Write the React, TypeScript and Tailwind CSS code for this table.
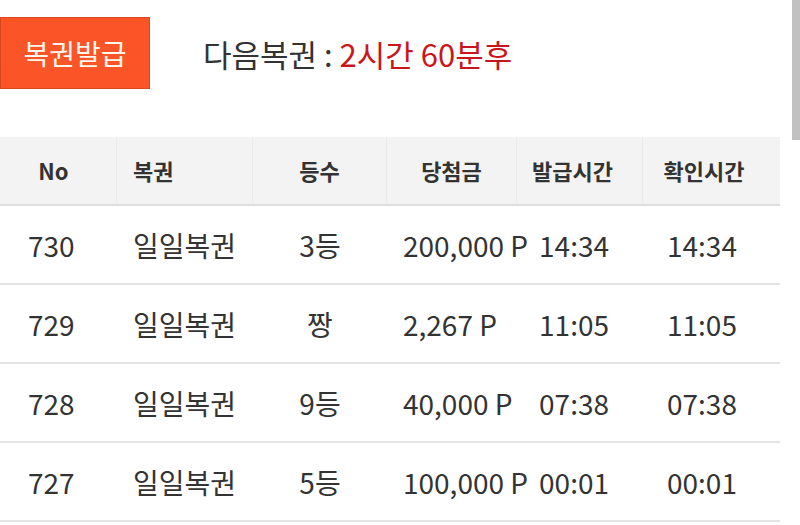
import React from 'react'

type Row = {
  no: number
  name: string
  rank: string
  prize: string
  issued: string
  checked: string
}

const rows: Row[] = [
  { no: 730, name: '일일복권', rank: '3등', prize: '200,000 P', issued: '14:34', checked: '14:34' },
  { no: 729, name: '일일복권', rank: '짱', prize: '2,267 P', issued: '11:05', checked: '11:05' },
  { no: 728, name: '일일복권', rank: '9등', prize: '40,000 P', issued: '07:38', checked: '07:38' },
  { no: 727, name: '일일복권', rank: '5등', prize: '100,000 P', issued: '00:01', checked: '00:01' },
]

const cols = 'grid grid-cols-[117px_136px_134px_130px_126px_137px]'

export default function App() {
  return (
    <div
      className="relative h-[525px] w-[800px] overflow-hidden bg-white text-[#333]"
      style={{ fontFamily: '"Noto Sans CJK KR", "Noto Sans", sans-serif' }}
    >
      {/* scrollbar thumb */}
      <div className="absolute right-0 top-0 h-[140px] w-[8px] bg-[#c1c1c1]" />

      <div className="flex items-center pt-[17px]">
        <button className="flex h-[72px] w-[150px] items-center justify-center border border-[#d9481f] bg-[#fb5427] text-[28px] text-[#fff7ee]">
          복권발급
        </button>
        <div className="ml-[53px] text-[31px] leading-none">
          <span className="text-[#333]">다음복권 : </span>
          <span className="text-[#c9161c]">2시간 60분후</span>
        </div>
      </div>

      <div className="mt-[48px] w-[780px]">
        <div className={`${cols} h-[69px] items-center border-b-2 border-[#dedede] bg-[#f3f3f3] text-[22px] font-bold`}>
          <div className="flex h-full items-center justify-center border-r border-[#ebebeb] pr-[9px]">No</div>
          <div className="flex h-full items-center border-r border-[#ebebeb] pl-4">복권</div>
          <div className="flex h-full items-center justify-center border-r border-[#ebebeb]">등수</div>
          <div className="flex h-full items-center justify-center border-r border-[#ebebeb]">당첨금</div>
          <div className="flex h-full items-center justify-center border-r border-[#ebebeb] pr-[14px]">발급시간</div>
          <div className="flex h-full items-center justify-center pr-[15px]">확인시간</div>
        </div>

        {rows.map((r) => (
          <div key={r.no} className={`${cols} h-[79px] items-center border-b-2 border-[#e3e3e3] text-[28px]`}>
            <div className="pl-[28px]">{r.no}</div>
            <div className="pl-4">{r.name}</div>
            <div className="text-center">{r.rank}</div>
            <div className="whitespace-nowrap pl-4">{r.prize}</div>
            <div className="pr-[34px] text-right">{r.issued}</div>
            <div className="pl-[24px]">{r.checked}</div>
          </div>
        ))}
      </div>
    </div>
  )
}
